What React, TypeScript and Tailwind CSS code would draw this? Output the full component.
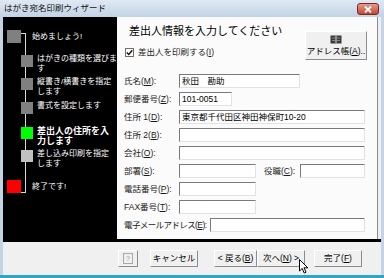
import React from "react";

const font = "font-['Liberation_Sans','Noto_Sans_CJK_JP',sans-serif]";

interface StepProps {
  lines: string[];
  square: string;
  height: string;
  bold?: boolean;
}

const steps: StepProps[] = [
  { lines: ["はがきの種類を選びま", "す"], square: "bg-[#808080]", height: "h-[23px]" },
  { lines: ["縦書き/横書きを指定", "します"], square: "bg-[#808080]", height: "h-[24px]" },
  { lines: ["書式を設定します"], square: "bg-[#808080]", height: "h-[25px]" },
  { lines: ["差出人の住所を入", "力します"], square: "bg-[#00ff00]", height: "h-[23px]", bold: true },
  { lines: ["差し込み印刷を指定", "します"], square: "bg-[#c0c0c0]", height: "h-[30px]" },
];

const Step = ({ lines, square, height, bold }: StepProps) => (
  <div className={`flex items-start ${height}`}>
    <div className={`relative ml-[18px] w-[12px] h-[12px] ${square}`} />
    <div
      className={`ml-[4px] -mt-px text-white leading-[10px] ${
        bold ? "text-[9px] font-bold" : "text-[8px]"
      }`}
    >
      {lines.map((l, i) => (
        <div key={i}>{l}</div>
      ))}
    </div>
  </div>
);

const Field = ({ w, value }: { w: string; value?: string }) => (
  <div
    className={`${w} h-[14px] bg-white border border-t-[#7a7a7a] border-l-[#7a7a7a] border-r-[#e2e2e2] border-b-[#e2e2e2] pl-[2px] text-[8.5px] leading-[12px] text-black whitespace-nowrap`}
  >
    {value}
  </div>
);

const Label = ({ w, text, k, tight }: { w: string; text: string; k: string; tight?: boolean }) => (
  <div className={`${w} text-[8.5px] text-[#1a1a1a] whitespace-nowrap ${tight ? "tracking-[-0.6px]" : ""}`}>
    {text}(<u>{k}</u>):
  </div>
);

const Btn = ({ w, children }: { w: string; children: React.ReactNode }) => (
  <div
    className={`${w} h-[17px] flex items-center justify-center bg-[#f0f0f0] border border-t-white border-l-white border-r-[#8c8c8c] border-b-[#8c8c8c] text-[8.5px] text-black whitespace-nowrap`}
  >
    {children}
  </div>
);

export default function App() {
  return (
    <div className={`relative w-[384px] h-[278px] overflow-hidden flex flex-col bg-[#c3d4e5] ${font}`}>
      {/* Title bar */}
      <div className="h-[17px] flex items-start justify-between pl-[4px] pr-[5px] bg-gradient-to-b from-[#dfe9f4] to-[#c2d3e4]">
        <span className="mt-[2px] text-[8.5px] leading-[12px] text-[#111]">はがき宛名印刷ウィザード</span>
        <div className="mt-[3px] w-[22px] h-[12px] rounded-[3px] border border-[#7a2a22] bg-gradient-to-b from-[#e49a8c] to-[#c5432f] flex items-center justify-center">
          <svg width="8" height="7" viewBox="0 0 8 7">
            <path d="M1 0.5 L7 6.5 M7 0.5 L1 6.5" stroke="white" strokeWidth="1.8" />
          </svg>
        </div>
      </div>

      {/* Client area */}
      <div className="flex-1 mx-[3px] flex flex-col bg-[#f0f0f0]">
        <div className="flex h-[225px] border-b-[3px] border-black">
          {/* Steps */}
          <div className="relative w-[114px] bg-black pt-[13px]">
            <div className="absolute left-[18px] top-[16px] w-[5px] h-[160px] border-t border-r border-b border-[#d8d8d8]" />
            <div className="flex items-start h-[25px]">
              <div className="relative ml-[4px] w-[14px] h-[13px] bg-[#808080]" />
              <div className="ml-[11px] text-[8px] leading-[13px] text-white">始めましょう!</div>
            </div>
            {steps.map((s, i) => (
              <Step key={i} {...s} />
            ))}
            <div className="flex items-start">
              <div className="relative ml-[4px] w-[14px] h-[13px] bg-[#ff0000]" />
              <div className="ml-[11px] text-[8px] leading-[13px] text-white">終了です!</div>
            </div>
          </div>

          {/* Form panel */}
          <div className="flex-1 mr-[3px] bg-[#fbfbfb] border-r border-[#8a8a8a]">
            <div className="h-[55px] flex justify-between pt-[7px] pl-[12px] pr-[10px]">
              <div>
                <div className="text-[11px] leading-[14px] text-black">差出人情報を入力してください</div>
                <div className="mt-[9px] -ml-[4px] flex items-center h-[10px]">
                  <div className="w-[9px] h-[9px] bg-white border border-[#6e6e6e] flex items-center justify-center">
                    <svg width="7" height="7" viewBox="0 0 7 7">
                      <path d="M0.8 3.4 L2.8 5.4 L6.3 1.2" stroke="#111" strokeWidth="1.4" fill="none" />
                    </svg>
                  </div>
                  <span className="ml-[4px] text-[8.5px] text-[#1a1a1a]">
                    差出人を印刷する(<u>I</u>)
                  </span>
                </div>
              </div>
              <div className="mt-[7px] w-[62px] h-[29px] flex flex-col items-center justify-center bg-[#f0f0f0] border border-t-white border-l-white border-r-[#8c8c8c] border-b-[#8c8c8c]">
                <svg width="12" height="9" viewBox="0 0 12 9">
                  <rect x="0.5" y="0.5" width="11" height="8" fill="#3a3a3a" />
                  <path d="M6 1 V8" stroke="#e0e0e0" strokeWidth="1" />
                  <path d="M2 3 H5 M7 3 H10 M2 5.5 H5 M7 5.5 H10" stroke="#9a9a9a" strokeWidth="0.8" />
                </svg>
                <span className="mt-[2px] text-[8.5px] leading-[10px] text-black">
                  アドレス帳(<u>A</u>)..
                </span>
              </div>
            </div>

            <div className="pl-[7px] flex flex-col">
              <div className="h-[18px] flex items-center">
                <Label w="w-[55px]" text="氏名" k="M" />
                <Field w="w-[121px]" value="秋田　勘助" />
              </div>
              <div className="h-[18px] flex items-center">
                <Label w="w-[55px]" text="郵便番号" k="Z" />
                <Field w="w-[53px]" value="101-0051" />
              </div>
              <div className="h-[18px] flex items-center">
                <Label w="w-[55px]" text="住所 1" k="D" />
                <Field w="w-[186px]" value="東京都千代田区神田神保町10-20" />
              </div>
              <div className="h-[18px] flex items-center">
                <Label w="w-[55px]" text="住所 2" k="B" />
                <Field w="w-[186px]" />
              </div>
              <div className="h-[18px] flex items-center">
                <Label w="w-[55px]" text="会社" k="O" />
                <Field w="w-[186px]" />
              </div>
              <div className="h-[18px] flex items-center">
                <Label w="w-[55px]" text="部署" k="S" />
                <Field w="w-[77px]" />
                <div className="ml-[8px]">
                  <Label w="w-[36px]" text="役職" k="C" />
                </div>
                <Field w="w-[65px]" />
              </div>
              <div className="h-[18px] flex items-center">
                <Label w="w-[55px]" text="電話番号" k="P" />
                <Field w="w-[77px]" />
              </div>
              <div className="h-[18px] flex items-center">
                <Label w="w-[55px]" text="FAX番号" k="T" />
                <Field w="w-[77px]" />
              </div>
              <div className="h-[18px] flex items-center">
                <Label w="w-[86px]" text="電子メールアドレス" k="E" tight />
                <Field w="w-[155px]" />
              </div>
            </div>
          </div>
        </div>

        {/* Buttons */}
        <div className="flex items-start pt-[8px] pl-[115px]">
          <Btn w="w-[20px]">
            <span className="w-[10px] h-[11px] border border-[#a8a8a8] text-[7px] leading-[9px] text-[#a0a0a0] flex items-center justify-center">
              ?
            </span>
          </Btn>
          <div className="ml-[12px]">
            <Btn w="w-[48px]">キャンセル</Btn>
          </div>
          <div className="ml-[16px] flex">
            <Btn w="w-[43px]">
              &lt; 戻る(<u>B</u>)
            </Btn>
            <Btn w="w-[48px]">
              次へ(<u>N</u>) &gt;
            </Btn>
          </div>
          <div className="ml-[9px]">
            <Btn w="w-[48px]">
              完了(<u>F</u>)
            </Btn>
          </div>
        </div>
      </div>

      <div className="h-[3px] bg-[#34a4c6]" />

      {/* Mouse cursor */}
      <svg className="absolute left-[299px] top-[259px]" width="10" height="15" viewBox="0 0 10 15">
        <path d="M0.5 0.5 V12 L3.2 9.4 L5.2 14 L7 13.2 L5 8.8 H8.8 Z" fill="white" stroke="black" strokeWidth="1" />
      </svg>
    </div>
  );
}
